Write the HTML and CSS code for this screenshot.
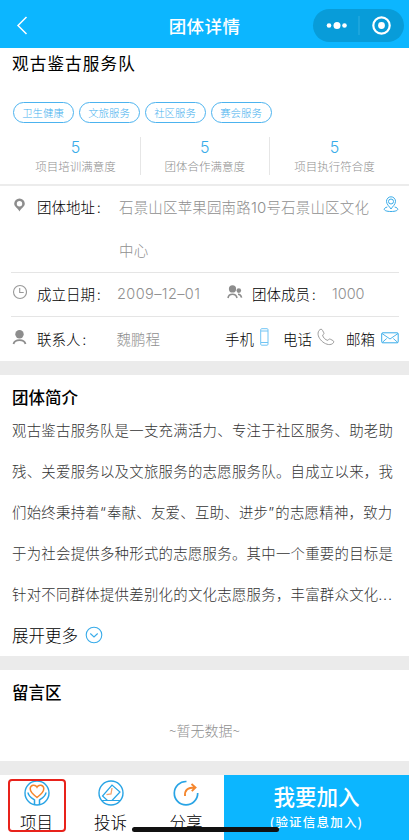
FILE: index.html
```html
<!DOCTYPE html>
<html lang="zh-CN">
<head>
<meta charset="utf-8">
<title>团体详情</title>
<link rel="stylesheet" href="styles.css">
</head>
<body>
<div class="page">
  <header class="nav">
    <svg class="back" width="12" height="20" viewBox="0 0 12 20"><path d="M10.500 1 2 9.500l8.500 8.500" fill="none" stroke="#fff" stroke-width="1.500"/></svg>
    <h1 class="nav-title">团体详情</h1>
    <div class="capsule">
      <svg width="91" height="33" viewBox="0 0 91 33"><g fill="#fff"><circle cx="16" cy="16.500" r="2.300"/><circle cx="24" cy="16.500" r="3.500"/><circle cx="31.500" cy="16.500" r="2.300"/><circle cx="68.500" cy="16.500" r="3.400"/></g><circle cx="68.500" cy="16.500" r="8.200" fill="none" stroke="#fff" stroke-width="2.200"/><path d="M46 7v19" stroke="#2faee0" stroke-width="1"/></svg>
    </div>
  </header>

  <section class="intro">
    <h2 class="team">观古鉴古服务队</h2>
    <div class="tags"><span class="tag">卫生健康</span><span class="tag">文旅服务</span><span class="tag">社区服务</span><span class="tag">赛会服务</span></div>
    <div class="stats">
      <div class="stat"><b>5</b><span>项目培训满意度</span></div>
      <div class="stat"><b>5</b><span>团体合作满意度</span></div>
      <div class="stat"><b>5</b><span>项目执行符合度</span></div>
    </div>
  </section>

  <section class="info">
    <div class="row address">
      <svg class="ico" width="16" height="16" viewBox="0 0 16 16"><path fill="#8d8d8d" fill-rule="evenodd" d="M8.500 1.500a5.300 5.300 0 0 0-5.300 5.300c0 2.900 3.600 4.400 5.300 7.700 1.700-3.300 5.300-4.800 5.300-7.700a5.300 5.300 0 0 0-5.300-5.300zm0 2.600a2.700 2.700 0 1 1 0 5.400 2.700 2.700 0 0 1 0-5.400z"/></svg>
      <span class="label">团体地址<i>:</i></span>
      <span class="value">石景山区苹果园南路<em>10</em>号石景山区文化<br>中心</span>
      <svg class="map" width="16" height="17" viewBox="0 0 16 17" fill="none" stroke="#38abe9" stroke-width="1"><path d="M8 13C6.500 10.500 3.500 8.500 3.500 5.300a4.500 4.500 0 0 1 9 0C12.500 8.500 9.500 10.500 8 13z"/><circle cx="8" cy="5.500" r="2.500"/><path d="M4.300 11C-.5 12.200 0 15.500 8 15.500s8.500-3.300 3.700-4.500"/></svg>
    </div>
    <div class="row single">
      <svg class="ico" width="16" height="16" viewBox="0 0 16 16" fill="none" stroke="#999" stroke-width="1.100"><circle cx="9" cy="8" r="6.500"/><path d="M8.700 4v4.500h4"/></svg>
      <span class="label">成立日期<i>:</i></span>
      <span class="value date">2009–12–01</span>
      <svg class="members" width="17" height="16" viewBox="0 0 17 16"><circle cx="6.500" cy="4.900" r="3.600" fill="#8d8d8d"/><circle cx="12.800" cy="6.600" r="2.300" fill="#8d8d8d"/><path d="M2 14c.8-5 8-5 9 0M12 10.300c1.800-.1 3 1 3.600 3.300" fill="none" stroke="#8d8d8d" stroke-width="1.600"/></svg>
      <span class="label">团体成员<i>:</i></span>
      <span class="value count">1000</span>
    </div>
    <div class="row single contact">
      <svg class="ico" width="16" height="16" viewBox="0 0 16 16"><circle cx="8.500" cy="5.300" r="4.200" fill="#8d8d8d"/><path d="M2.500 15c1.300-5.200 10.700-5.200 12 0" fill="none" stroke="#8d8d8d" stroke-width="1.800"/></svg>
      <span class="label">联系人<i>:</i></span>
      <span class="value name">魏鹏程</span>
      <span class="way">手机</span>
      <svg class="phone" width="9" height="18" viewBox="0 0 9 18" fill="none" stroke="#70c4f4"><rect x=".7" y=".7" width="7.300" height="16.500" rx="1"/><path d="M1 3h7M1 14.500h7"/></svg>
      <span class="way">电话</span>
      <svg class="tel" width="18" height="18" viewBox="0 0 18 18" fill="none" stroke="#929292" stroke-width=".9"><path d="M2 2.500C3.500.8 4.800.8 5.600 2.500l1.200 2.300c.5 1-.1 1.600-1.200 2.300.5 2.600 2.700 4.800 5.300 5.300.8-1.300 1.500-1.600 2.400-1.200l2.700 1.400c1.200.7 1 1.800-.6 3.200C9 19.500-2.300 9 2 2.500z"/></svg>
      <span class="way">邮箱</span>
      <svg class="mail" width="18" height="12" viewBox="0 0 18 12" fill="none" stroke="#38abe9"><rect x=".7" y=".8" width="16.500" height="10" rx="1"/><path d="m1 1.500 8 5.500 8-5.500M1.200 10.500l4.500-4M16.800 10.500l-4.500-4" stroke-width=".9"/></svg>
    </div>
  </section>

  <section class="about">
    <h3>团体简介</h3>
    <p>观古鉴古服务队是一支充满活力、专注于社区服务、助老助<br>残、关爱服务以及文旅服务的志愿服务队。自成立以来，我<br>们始终秉持着<q>“</q>奉献、友爱、互助、进步<q>”</q>的志愿精神，致力<br>于为社会提供多种形式的志愿服务。其中一个重要的目标是<br>针对不同群体提供差别化的文化志愿服务，丰富群众文化<span class="dots">...</span></p>
    <div class="more">展开更多<svg width="18" height="18" viewBox="0 0 18 18" fill="none" stroke="#38abe9" stroke-width="1.100"><circle cx="9" cy="9" r="7.800"/><path d="m5.300 7.500 3.700 3.500 3.700-3.500"/></svg></div>
  </section>

  <section class="board">
    <h3>留言区</h3>
    <div class="empty">~暂无数据~</div>
  </section>

  <footer class="bar">
    <div class="tab">
      <svg width="28" height="28" viewBox="0 0 28 28" fill="none"><circle cx="14" cy="14" r="12" stroke="#29a4e5" stroke-width="1.400"/><path d="M14 18.500C10 15.500 7.200 13 7.200 9.800c0-4 5-4.900 6.800-1.600 1.800-3.300 6.800-2.400 6.800 1.600 0 3.200-2.800 5.700-6.800 8.700z" stroke="#f5862d" stroke-width="1.500"/><path d="M5 13.500c.4 3.800 3.500 5.500 6.500 7.500v4.300M23 13.500c-.4 3.800-3.500 5.500-6.500 7.500v4.300" stroke="#29a4e5" stroke-width="1.500"/></svg>
      <span>项目</span>
    </div>
    <div class="tab">
      <svg width="28" height="28" viewBox="0 0 28 28" fill="none"><circle cx="14" cy="14" r="12" stroke="#29a4e5" stroke-width="1.400"/><path d="M10.500 21.500 5.500 17l9.500-11 8 7-8 8.500M4.500 21.500h19" stroke="#29a4e5" stroke-width="1.200"/><path d="m15 9-1 6-4.500.7" stroke="#f5a36b" stroke-width="1.300"/></svg>
      <span>投诉</span>
    </div>
    <div class="tab">
      <svg width="28" height="28" viewBox="0 0 28 28" fill="none"><path d="M14.500 2.500A11.700 11.700 0 1 0 25.700 14" stroke="#29a4e5" stroke-width="1.700"/><path d="M13 17c-.4-6 2.500-8.500 10-8.500M19.500 5l4 3.500-3.700 3.700" stroke="#f5862d" stroke-width="1.900"/></svg>
      <span>分享</span>
    </div>
    <div class="join"><strong>我要加入</strong><span>(验证信息加入)</span></div>
    <i class="highlight"></i>
    <i class="home"></i>
  </footer>
</div>
</body>
</html>
```
FILE: styles.css
```css
* { box-sizing: border-box; }
body { margin: 0; background: #fff; font-family: "Noto Sans CJK SC", sans-serif; color: #000; }
h1, h2, h3, p { margin: 0; }
svg { display: block; flex: none; }
.page { width: 409px; height: 840px; overflow: hidden; display: flex; flex-direction: column; }

.nav { height: 48px; flex: none; background: #0cb6ff; display: grid; grid-template-columns: 96px 1fr 96px; align-items: center; padding-top: 3px; }
.back { margin-left: 16px; }
.nav-title { text-align: center; color: #fff; font-size: 17.500px; font-weight: 500; line-height: 24px; letter-spacing: .4px; }
.capsule { width: 91px; height: 33px; border-radius: 17px; background: #089cd9; }

.intro { height: 138px; flex: none; border-bottom: 2px solid #ececec; }
.team { font-size: 16.600px; font-weight: 400; letter-spacing: 1.100px; line-height: 24px; padding: 3px 12px 0; }
.tags { display: flex; gap: 5px; padding: 27px 12.500px 0; }
.tag { width: 61px; height: 21px; border: 1px solid #4cb3ef; border-radius: 11px; color: #45b0ee; font-size: 10.400px; line-height: 19px; text-align: center; font-weight: 300; }
.stats { display: grid; grid-template-columns: 1fr 1fr 1fr; padding: 0 10px 0 11.500px; margin-top: 14px; }
.stat { height: 38px; display: flex; flex-direction: column; align-items: center; border-right: 1px solid #e6e6e6; }
.stat:last-child { border-right: 0; }
.stat b { font: 300 16px/21px Inter, sans-serif; color: #38abe9; }
.stat span { font-size: 11.500px; line-height: 16px; color: #8f8f8f; font-weight: 300; white-space: nowrap; }

.info { height: 175px; flex: none; padding: 0 10px 0 11px; }
.row { display: flex; border-bottom: 1px solid #e5e5e5; white-space: nowrap; font-size: 14.500px; }
.row .label { font-weight: 300; }
.row .label i { font-style: normal; margin-left: 2px; }
.row .way { font-weight: 300; }
.row .value { color: #8f8f8f; font-weight: 300; }
.row em { font: 300 15px/1 Inter, sans-serif; }
.ico { margin-right: 10px; }
.address { height: 87px; line-height: 43px; }
.address .ico { margin-top: 11px; }
.address .label { width: 82px; margin-top: -1px; }
.address .value { width: 264px; letter-spacing: .16px; margin-top: -1px; }
.map { margin-top: 10px; }
.single { height: 44px; align-items: center; padding-bottom: 2px; }
.single .ico { margin-bottom: 3px; }
.single .label { width: 80px; }
.date { width: 109px; font-family: Inter, sans-serif; font-size: 14.500px; letter-spacing: .4px; }
.members { margin: 0 9px 3px 0; }
.count { font-family: Inter, sans-serif; font-size: 14.500px; }
.contact { border: 0; padding-bottom: 2px; }
.name { width: 109px; }
.phone { margin: 0 14px 3px 6px; }
.tel { margin: 0 11px 3px 5px; }
.mail { margin-left: 6px; }

.about { height: 309px; flex: none; border-top: 14px solid #ebebeb; border-bottom: 14px solid #ebebeb; padding-left: 12px; }
h3 { font-size: 16.500px; font-weight: 500; line-height: 24px; }
.about h3 { padding-top: 10px; }
.about p { font-size: 14.400px; letter-spacing: .27px; line-height: 40.900px; font-weight: 300; color: #333; white-space: nowrap; margin-top: 1px; }
.about q { quotes: none; font-family: Inter, sans-serif; display: inline-block; width: 7px; line-height: 1; }
.about q::before, .about q::after { content: none; }
.dots { letter-spacing: 1.200px; }
.more { display: flex; align-items: center; gap: 7px; font-size: 16.500px; line-height: 24px; margin-top: 8px; font-weight: 300; }

.board { height: 105px; flex: none; border-bottom: 14px solid #ebebeb; padding: 10px 0 0 12px; }
.empty { font-size: 14px; line-height: 20px; color: #8f8f8f; font-weight: 300; text-align: center; padding-right: 12px; margin-top: 16px; }

.bar { height: 65px; flex: none; display: grid; grid-template-columns: 73px 75px 76px 1fr; position: relative; }
.tab { display: flex; flex-direction: column; align-items: center; padding-top: 5px; }
.tab svg { margin-top: -1px; }
.tab span { font-size: 16.500px; line-height: 24px; margin-top: 3px; font-weight: 300; white-space: nowrap; }
.join { background: #0cb6ff; color: #fff; text-align: center; display: flex; flex-direction: column; }
.join strong { font-size: 21.500px; font-weight: 500; line-height: 30px; padding-top: 6px; }
.join span { font-size: 12.500px; font-weight: 500; line-height: 18px; letter-spacing: 1.200px; margin-top: 2px; }
.highlight { position: absolute; left: 8px; top: 4px; width: 58px; height: 53px; border: 2.500px solid #e8221b; border-radius: 4px; }
.home { position: absolute; left: 132px; top: 52px; width: 147px; height: 4.500px; border-radius: 3px; background: #111; }
```
